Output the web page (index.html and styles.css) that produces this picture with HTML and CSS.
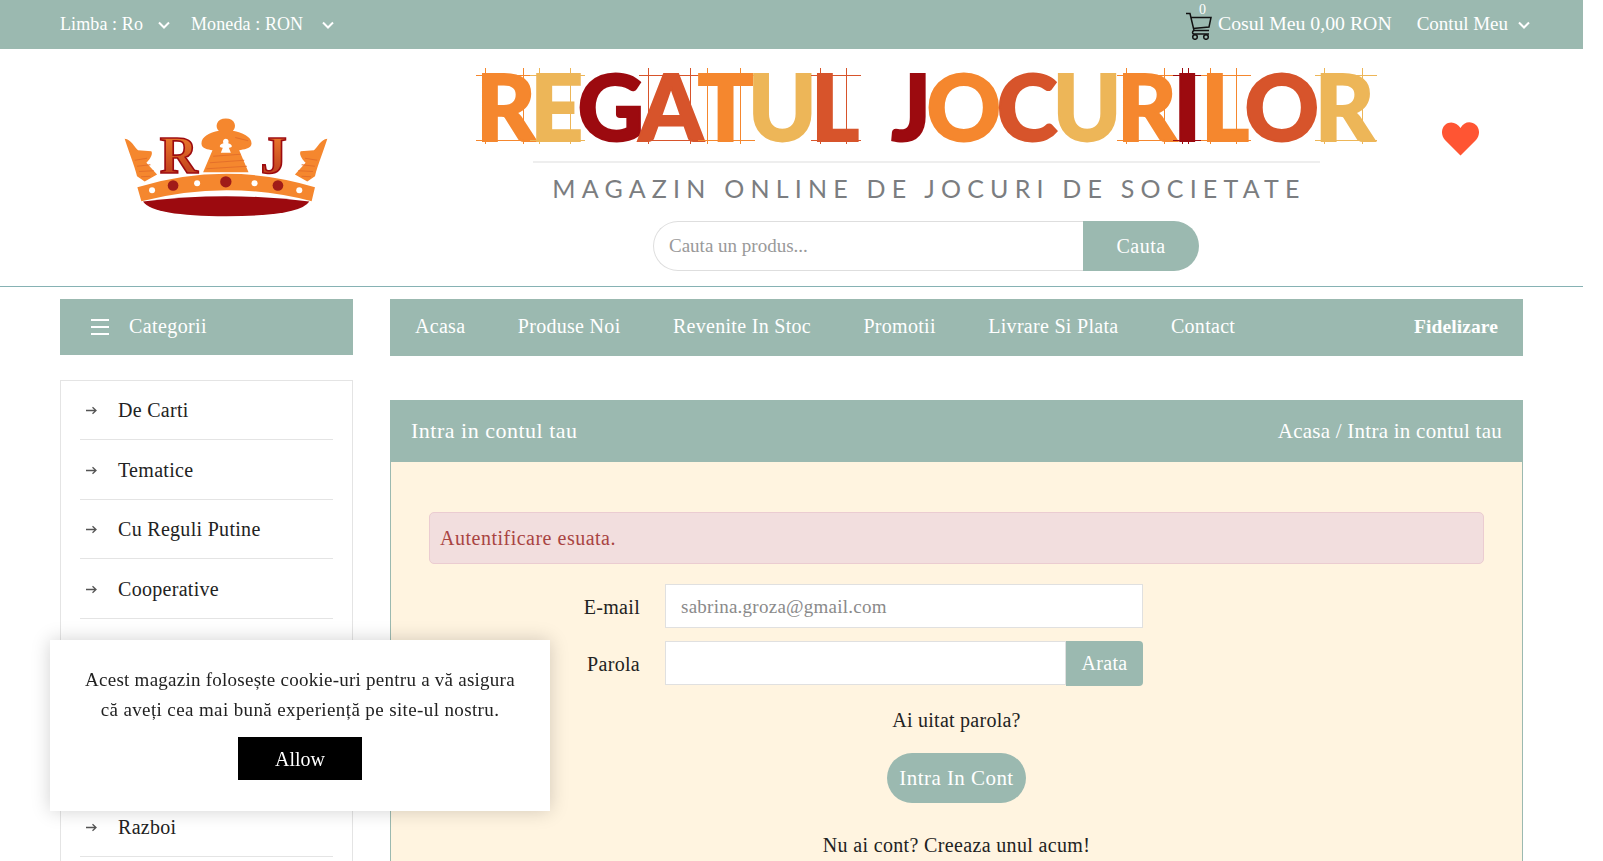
FILE: index.html
```html
<!DOCTYPE html>
<html lang="ro">
<head>
<meta charset="utf-8">
<title>Regatul Jocurilor</title>
<link rel="stylesheet" href="styles.css">
</head>
<body>
<div class="page">
  <div class="topbar">
    <div class="topbar-group">
      <span class="top-item lang">Limba : Ro<svg class="chev" viewBox="0 0 12 8"><polyline points="1,1.5 6,6.5 11,1.5"/></svg></span>
      <span class="top-item currency">Moneda : RON<svg class="chev" viewBox="0 0 12 8"><polyline points="1,1.5 6,6.5 11,1.5"/></svg></span>
    </div>
    <div class="topbar-group right">
      <span class="cart">
        <svg class="cart-icon" viewBox="0 0 27 28"><path d="M1 1.500h4l4 17h15M6 5.500h20l-2 9.500-16 1.500"/><path d="M9 18.500c-2 .5-2 3.500 0 3.500h15"/><circle cx="10" cy="25" r="2.300"/><circle cx="21" cy="25" r="2.300"/></svg>
        <span class="cart-count">0</span>
        <span class="cart-label">Cosul Meu 0,00 RON</span>
      </span>
      <span class="top-item account">Contul Meu<svg class="chev" viewBox="0 0 12 8"><polyline points="1,1.5 6,6.5 11,1.5"/></svg></span>
    </div>
  </div>

  <header class="masthead">
    <div class="crown-cell">
      <svg class="crown" viewBox="370 350 620 305">
        <defs>
          <linearGradient id="letterfill" x1="0" y1="0" x2="0" y2="1">
            <stop offset="0" stop-color="#f5872e"/>
            <stop offset="1" stop-color="#b5301a"/>
          </linearGradient>
        </defs>
        <g class="blade">
          <path d="M375 418C395 420 405 445 415 452L455 455C462 465 445 485 440 490L472 525L435 546L412 530C405 500 385 450 375 418Z"/>
          <path class="stripe" d="M405 482L442 476M412 500L452 496M418 516L462 514M424 532L452 530"/>
        </g>
        <g class="blade" transform="translate(1357 0) scale(-1 1)">
          <path d="M375 418C395 420 405 445 415 452L455 455C462 465 445 485 440 490L472 525L435 546L412 530C405 500 385 450 375 418Z"/>
          <path class="stripe" d="M405 482L442 476M412 500L452 496M418 516L462 514M424 532L452 530"/>
        </g>
        <path class="meeple" d="M678 357C706 357 712 382 699 394C727 399 755 412 755 432C755 448 730 450 718 452L746 518L610 518L638 452C625 450 605 448 605 432C605 412 629 399 657 394C644 382 650 357 678 357Z"/>
        <path class="stripe" d="M706 414L745 424M640 470L722 464M630 490L733 482M620 508L741 500"/>
        <path class="star" d="M678 418C686 418 688 427 685 431C691 432 697 436 696 441C694 445 689 444 687 445L693 460L663 460L669 445C667 444 662 445 660 441C659 436 665 432 671 431C668 427 670 418 678 418Z"/>
        <text class="crown-letter" x="480" y="521">R</text>
        <text class="crown-letter" x="782" y="521">J</text>
        <path class="band" d="M413 563Q680 483 945 563L935 605Q680 539 425 605Z"/>
        <path class="velvet" d="M430 606Q680 574 928 606Q900 650 680 650Q460 650 430 606Z"/>
        <circle class="gem" cx="520" cy="558" r="16"/><circle class="gem" cx="678" cy="547" r="17"/><circle class="gem" cx="834" cy="558" r="16"/>
        <circle class="pearl" cx="457" cy="572" r="9"/><circle class="pearl" cx="592" cy="551" r="9"/><circle class="pearl" cx="764" cy="551" r="9"/><circle class="pearl" cx="898" cy="572" r="9"/>
      </svg>
    </div>
    <div class="brand">
      <div class="brand-title">
        <span class="word first">
          <span class="l orange sk">R</span><span class="l yellow sk">E</span><span class="l dark">G</span><span class="l rust sk">A</span><span class="l orange sk">T</span><span class="l yellow">U</span><span class="l rust sk">L</span>
        </span>
        <span class="word">
          <span class="l dark">J</span><span class="l orange">O</span><span class="l rust">C</span><span class="l yellow">U</span><span class="l orange sk">R</span><span class="l dark sk slim">I</span><span class="l orange sk">L</span><span class="l rust">O</span><span class="l yellow sk">R</span>
        </span>
      </div>
      <div class="brand-rule"></div>
      <div class="brand-sub">MAGAZIN ONLINE DE JOCURI DE SOCIETATE</div>
      <form class="search">
        <input class="search-input" type="text" placeholder="Cauta un produs...">
        <button class="search-btn" type="button">Cauta</button>
      </form>
    </div>
    <div class="heart-cell">
      <svg class="heart" viewBox="0 0 37 34"><path d="M18.500 33.500L3 18C-1.500 13-.5 6 3 3c5-4.500 12-2.500 15.500 3C22-.5 29-1.500 34 3c3.500 3 4.500 10 0 15Z"/></svg>
    </div>
  </header>

  <div class="content">
    <aside class="sidebar">
      <div class="cat-head">
        <svg class="burger" viewBox="0 0 18 16"><path d="M0 1h18M0 8h18M0 15h18"/></svg>
        <span>Categorii</span>
      </div>
      <ul class="cat-list">
        <li class="cat-item"><svg class="arrow" viewBox="0 0 11 9"><path d="M0 4.500h9.500M6.500 1.200l3.500 3.300-3.500 3.300"/></svg>De Carti</li>
        <li class="cat-item"><svg class="arrow" viewBox="0 0 11 9"><path d="M0 4.500h9.500M6.500 1.200l3.500 3.300-3.500 3.300"/></svg>Tematice</li>
        <li class="cat-item"><svg class="arrow" viewBox="0 0 11 9"><path d="M0 4.500h9.500M6.500 1.200l3.500 3.300-3.500 3.300"/></svg>Cu Reguli Putine</li>
        <li class="cat-item"><svg class="arrow" viewBox="0 0 11 9"><path d="M0 4.500h9.500M6.500 1.200l3.500 3.300-3.500 3.300"/></svg>Cooperative</li>
        <li class="cat-item"></li>
        <li class="cat-item"></li>
        <li class="cat-item"></li>
        <li class="cat-item"><svg class="arrow" viewBox="0 0 11 9"><path d="M0 4.500h9.500M6.500 1.200l3.500 3.300-3.500 3.300"/></svg>Razboi</li>
        <li class="cat-item"></li>
      </ul>
    </aside>
    <main class="main">
      <nav class="mainnav">
        <a class="nav-link">Acasa</a>
        <a class="nav-link">Produse Noi</a>
        <a class="nav-link">Revenite In Stoc</a>
        <a class="nav-link">Promotii</a>
        <a class="nav-link">Livrare Si Plata</a>
        <a class="nav-link">Contact</a>
        <a class="nav-link nav-end">Fidelizare</a>
      </nav>
      <section class="panel">
        <div class="panel-head">
          <span class="panel-title">Intra in contul tau</span>
          <span class="crumbs">Acasa / Intra in contul tau</span>
        </div>
        <div class="panel-body">
          <div class="alert">Autentificare esuata.</div>
          <div class="form-row">
            <label class="form-label">E-mail</label>
            <input class="form-input" type="text" value="sabrina.groza@gmail.com">
          </div>
          <div class="form-row">
            <label class="form-label">Parola</label>
            <input class="form-input joined" type="password">
            <button class="show-btn" type="button">Arata</button>
          </div>
          <p class="forgot">Ai uitat parola?</p>
          <button class="login-btn" type="button">Intra In Cont</button>
          <p class="signup">Nu ai cont? Creeaza unul acum!</p>
        </div>
      </section>
    </main>
  </div>
</div>
<div class="cookie">
  <p class="cookie-text">Acest magazin folosește cookie-uri pentru a vă asigura<br><span class="cookie-second">că aveți cea mai bună experiență pe site-ul nostru.</span></p>
  <button class="cookie-btn" type="button">Allow</button>
</div>
</body>
</html>
```
FILE: styles.css
```css
* { box-sizing: border-box; }
html, body { margin: 0; height: 861px; overflow: hidden; background: #fff; }
body { font-family: "Liberation Serif", serif; font-size: 20px; letter-spacing: .3px; color: #222; padding-right: 20px; }
.page { width: 1583px; }

.topbar { height: 49px; background: #9bb9b0; color: #fff; display: flex; justify-content: space-between; align-items: center; padding: 0 53px 0 60px; font-size: 18px; letter-spacing: .1px; }
.topbar-group { display: flex; align-items: center; gap: 20px; }
.top-item { display: inline-flex; align-items: center; }
.chev { width: 12px; height: 8px; margin-left: 17px; fill: none; stroke: #fff; stroke-width: 2; }
.lang .chev { margin-left: 15px; }
.currency { margin-left: 1px; }
.currency .chev { margin-left: 19px; }
.cart { display: inline-flex; align-items: center; position: relative; }
.cart-icon { width: 27px; height: 28px; fill: none; stroke: #111; stroke-width: 1.500; margin-right: 6px; margin-top: 3px; }
.cart-count { position: absolute; left: 14px; top: -7px; font-size: 14px; }
.cart-label { font-size: 19.800px; letter-spacing: 0; padding-bottom: 2px; }
.account { margin-left: 5px; font-size: 19px; letter-spacing: 0; padding-bottom: 1px; }
.account .chev { margin-left: 10px; margin-top: 1px; }

.masthead { height: 238px; border-bottom: 1px solid #86b2b4; display: grid; grid-template-columns: 396px 940px 127px; padding-left: 60px; align-items: start; }
.crown-cell { padding: 67px 64px 0 0; display: flex; justify-content: center; }
.crown { width: 207px; height: 102px; display: block; }
.blade path:first-child, .meeple { fill: #f5872e; }
.stripe { fill: none; stroke: #e4702a; stroke-width: 3; }
.star, .pearl { fill: #fff; }
.crown-letter { font-family: "Liberation Serif", serif; font-weight: 700; font-size: 158px; letter-spacing: 0; fill: url(#letterfill); stroke: #9c0a0f; stroke-width: 5; }
.band { fill: #f5872e; }
.velvet { fill: #9c0a0f; }
.gem { fill: #a01c18; }

.brand { display: flex; flex-direction: column; align-items: center; }
.brand-title { height: 112px; padding: 11px 26px 0 20px; width: 940px; display: flex; justify-content: space-between; font-family: Lato, sans-serif; font-weight: 900; font-size: 92px; line-height: 92px; letter-spacing: 0; white-space: nowrap; }
.word { display: flex; }
.l { display: block; position: relative; margin-right: -4.500px; -webkit-text-stroke: 2px currentColor; }
.first .l { margin-right: -5.500px; }
.l.slim { margin: 0 0 0 1px; }
.orange { color: #f5872e; } .yellow { color: #edb658; } .dark { color: #9c0a0f; } .rust { color: #d7542b; }
.sk { background: linear-gradient(currentColor, currentColor) 9px 8px / 1px 76px no-repeat, linear-gradient(currentColor, currentColor) calc(100% - 12px) 8px / 1px 76px no-repeat; }
.sk::before, .sk::after { content: ""; position: absolute; left: 0; right: -2px; height: 1px; background: currentColor; }
.sk::before { top: 15px; }
.sk::after { top: 80px; }
.brand-rule { width: 787px; height: 2px; background: #eeeeee; }
.brand-sub { margin: 8px 0 0 6px; font-family: Lato, sans-serif; font-size: 25px; line-height: 34px; letter-spacing: 6.200px; color: #7b7d80; white-space: nowrap; }
.search { display: flex; width: 546px; height: 50px; margin-top: 16px; }
.search-input { flex: 1; min-width: 0; border: 1px solid #dedede; border-right: 0; border-radius: 25px 0 0 25px; padding: 0 15px; font: 19px "Liberation Serif", serif; outline: 0; }
.search-input::placeholder { color: #999; }
.search-btn { width: 116px; border: 0; padding-top: 2px; background: #9bb9b0; color: #fff; border-radius: 0 25px 25px 0; font: 20px "Liberation Serif", serif; letter-spacing: .5px; }
.heart-cell { display: flex; justify-content: center; padding: 73px 0 0 2px; }
.heart { width: 37px; height: 34px; fill: #ff5533; }

.content { display: grid; grid-template-columns: 293px 1133px; column-gap: 37px; padding: 12px 0 0 60px; }
.cat-head { height: 56px; padding-bottom: 1px; background: #9bb9b0; color: #fff; display: flex; align-items: center; padding-left: 31px; gap: 20px; letter-spacing: .4px; }
.burger { width: 18px; height: 16px; fill: none; stroke: #fff; stroke-width: 2; }
.cat-list { list-style: none; margin: 24.500px 0 0; padding: 0 19px; border: 1px solid #e4e4e4; }
.cat-item { height: 59.500px; padding-top: 2px; display: flex; align-items: center; border-bottom: 1px solid #e4e4e4; color: #222; }
.arrow { width: 11px; height: 9px; margin: 0 21px 0 6px; fill: none; stroke: #555; stroke-width: 1.300; }

.mainnav { height: 57px; padding: 0 25px 2px; background: #9bb9b0; color: #fff; display: flex; align-items: center; gap: 52.400px; }
.nav-end { margin-left: auto; font-weight: 700; font-size: 19.500px; letter-spacing: .1px; }
.panel { margin-top: 44px; border: 1px solid #9bb9b0; background: #fff4e0; }
.panel-head { height: 62px; margin: -1px -1px 0; background: #9bb9b0; color: #fff; display: flex; justify-content: space-between; align-items: center; padding: 0 21px; }
.panel-title { font-size: 22px; letter-spacing: .5px; }
.crumbs { font-size: 21px; letter-spacing: .25px; }
.panel-body { padding: 50px 38px 40px; display: flex; flex-direction: column; align-items: center; }
.alert { align-self: stretch; height: 52px; background: #f2dede; border: 1px solid #ebccd1; border-radius: 5px; color: #a94442; display: flex; align-items: center; padding: 0 10px; letter-spacing: .5px; }
.form-row { align-self: stretch; display: flex; align-items: flex-start; margin-top: 13px; }
.alert + .form-row { margin-top: 20px; }
.form-label { width: 211px; height: 44px; margin-right: 25px; text-align: right; line-height: 46px; }
.form-input { width: 478px; height: 44px; border: 1px solid #e0e0e0; padding: 2px 15px 0; font: 19px "Liberation Serif", serif; letter-spacing: .25px; color: #8a8a8a; background: #fff; outline: 0; }
.form-input.joined { width: 401px; }
.show-btn { width: 77px; height: 45px; border: 0; background: #9bb9b0; color: #fff; border-radius: 0 4px 4px 0; font: 20px "Liberation Serif", serif; letter-spacing: .3px; }
.forgot { margin: 22px 0 0; line-height: 24px; letter-spacing: .25px; }
.login-btn { margin-top: 21px; width: 139px; height: 50px; border: 0; border-radius: 25px; background: #9bb9b0; color: #fff; font: 21px "Liberation Serif", serif; letter-spacing: .45px; }
.signup { margin: 30px 0 0; line-height: 24px; letter-spacing: .35px; }

.cookie { position: fixed; left: 50px; bottom: 50px; width: 500px; height: 171px; background: #fff; box-shadow: 0 0 18px rgba(0,0,0,.18); padding-top: 25px; text-align: center; font-size: 19px; letter-spacing: .25px; }
.cookie-text { margin: 0 0 12px; line-height: 30px; color: #222; }
.cookie-second { letter-spacing: .38px; }
.cookie-btn { width: 124px; height: 43px; border: 0; padding-top: 2px; background: #000; color: #fff; font: 20px "Liberation Serif", serif; }
```
